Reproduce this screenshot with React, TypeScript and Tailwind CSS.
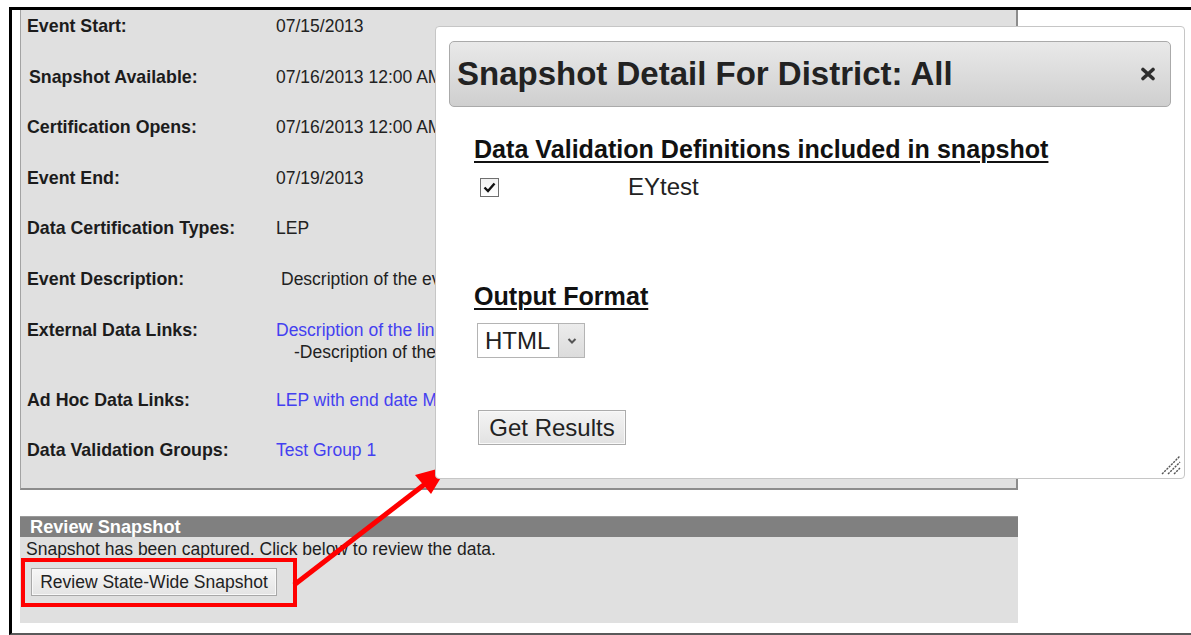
import React from "react";

type RowProps = {
  label: string;
  children: React.ReactNode;
  rowClass: string;
  labelClass?: string;
};

function Row({ label, children, rowClass, labelClass = "" }: RowProps) {
  return (
    <div className={`flex ${rowClass}`}>
      <div className={`w-[249px] shrink-0 font-bold text-[17.8px] text-[#1c1c1c] ${labelClass}`}>{label}</div>
      <div className="whitespace-nowrap text-[#222]">{children}</div>
    </div>
  );
}

function CloseIcon() {
  return (
    <svg width="16" height="14" viewBox="0 0 16 14" aria-hidden="true">
      <path d="M3 2.5 L13 11.5 M13 2.5 L3 11.5" stroke="#2e2e2e" strokeWidth="3.6" strokeLinecap="round" />
    </svg>
  );
}

function CheckedBox() {
  return (
    <div className="w-[19px] h-[19px] border border-[#6f6f6f] bg-gradient-to-b from-[#f2f2f2] to-white flex items-center justify-center">
      <svg width="15" height="15" viewBox="0 0 15 15" aria-hidden="true">
        <path d="M2.5 7.5 L6 11 L12.5 3.5" fill="none" stroke="#111" strokeWidth="2.4" />
      </svg>
    </div>
  );
}

function ResizeGrip() {
  return (
    <svg width="22" height="22" viewBox="0 0 22 22" aria-hidden="true">
      <g stroke="#555" strokeWidth="1.4" strokeDasharray="2.2 1">
        <path d="M3 21 L21 3" />
        <path d="M9 21 L21 9" />
        <path d="M15 21 L21 15" />
      </g>
    </svg>
  );
}

export default function App() {
  return (
    <div className="relative w-[1191px] h-[635px] overflow-hidden bg-white pt-[7px] pl-[9px] font-['Liberation_Sans',Arial,sans-serif] text-[17.5px] leading-[22px]">
      {/* page frame */}
      <div className="w-[1182px] h-[628px] border-l-[3px] border-t-[3px] border-black border-b-2 border-b-[#5a5a5a] pl-[8px]">
        {/* event detail panel */}
        <div className="w-[998px] h-[480px] bg-[#e0e0e0] border-l border-l-[#a3a3a3] border-r-2 border-r-[#8c8c8c] border-b-2 border-b-[#8c8c8c] pl-[6px] pt-[5px] overflow-hidden">
          <Row label="Event Start:" rowClass="h-[50.6px]">07/15/2013</Row>
          <Row label="Snapshot Available:" rowClass="h-[50.6px]" labelClass="pl-[2px]">
            07/16/2013 12:00 AM
          </Row>
          <Row label="Certification Opens:" rowClass="h-[50.6px]">07/16/2013 12:00 AM</Row>
          <Row label="Event End:" rowClass="h-[50.6px]">07/19/2013</Row>
          <Row label="Data Certification Types:" rowClass="h-[50.6px]">LEP</Row>
          <Row label="Event Description:" rowClass="h-[50.6px]">
            <span className="pl-[5px]">Description of the event</span>
          </Row>
          <Row label="External Data Links:" rowClass="h-[70px]">
            <div className="text-[#4440f0]">Description of the link</div>
            <div className="pl-[18px]">-Description of the link</div>
          </Row>
          <Row label="Ad Hoc Data Links:" rowClass="h-[50.6px]">
            <span className="text-[#4440f0]">LEP with end date Missing</span>
          </Row>
          <Row label="Data Validation Groups:" rowClass="h-[50.6px]">
            <span className="text-[#4440f0]">Test Group 1</span>
          </Row>
        </div>

        {/* review snapshot section */}
        <div className="mt-[26px] w-[998px]">
          <div className="h-[21px] bg-[#808080] border-t border-t-[#9a9a9a] pl-[10px] text-white font-bold text-[18.2px] leading-[20px]">
            Review Snapshot
          </div>
          <div className="h-[86px] bg-[#e0e0e0] pl-[6px] pt-[1px]">
            <div className="text-[#1e1e1e]">Snapshot has been captured. Click below to review the data.</div>
            <button className="mt-[8px] ml-[5px] w-[246px] h-[28px] border border-[#a8a8a8] bg-gradient-to-b from-[#f6f6f6] to-[#e4e4e4] text-[#222] text-[17.5px] leading-[22px] shadow-[inset_0_0_0_1px_#f8f8f8]">
              Review State-Wide Snapshot
            </button>
          </div>
        </div>
      </div>

      {/* highlight around the review button */}
      <div className="absolute left-[21px] top-[558px] w-[276px] h-[49px] border-[4px] border-[#ff0000]" />

      {/* pointer arrow */}
      <svg className="absolute left-0 top-0" width="1191" height="635" aria-hidden="true">
        <line x1="294" y1="585" x2="425" y2="484" stroke="#ff0000" strokeWidth="5" />
        <polygon points="448,466 431,494 415,475" fill="#ff0000" />
      </svg>

      {/* snapshot detail dialog */}
      <div className="absolute left-[435px] top-[26px] w-[750px] h-[453px] bg-white border border-[#c6c6c6] rounded-[4px] pt-[14px] px-[13px]">
        <div className="h-[66px] rounded-[5px] border border-[#aaaaaa] bg-gradient-to-b from-[#e9e9e9] to-[#cfcfcf] flex items-center justify-between pl-[7px] pr-[14px]">
          <div className="text-[33px] leading-[38px] font-bold text-[#222]">Snapshot Detail For District: All</div>
          <CloseIcon />
        </div>

        <div className="pl-[25px]">
          <div className="mt-[28px] text-[25.1px] leading-[29px] font-bold text-[#111] underline decoration-2 underline-offset-[3px]">
            Data Validation Definitions included in snapshot
          </div>
          <div className="mt-[8px] h-[30px] flex items-center">
            <div className="ml-[6px]">
              <CheckedBox />
            </div>
            <div className="ml-[129px] text-[24px] leading-[30px] text-[#222]">EYtest</div>
          </div>

          <div className="mt-[80px] text-[25.1px] leading-[29px] font-bold text-[#111] underline decoration-2 underline-offset-[3px]">
            Output Format
          </div>
          <div className="mt-[12px] ml-[3px] flex w-[108px] h-[35px] border border-[#b4b4b4] bg-white">
            <div className="flex-1 pl-[7px] text-[24px] leading-[33px] text-[#222]">HTML</div>
            <div className="w-[26px] h-full border-l border-l-[#b4b4b4] bg-gradient-to-b from-[#ececec] to-[#dcdcdc] flex items-center justify-center">
              <svg width="12" height="8" viewBox="0 0 12 8" aria-hidden="true">
                <path d="M2.5 2 L6 5.5 L9.5 2" fill="none" stroke="#555" strokeWidth="2" />
              </svg>
            </div>
          </div>

          <button className="mt-[52px] ml-[4px] w-[148px] h-[35px] border border-[#acacac] bg-gradient-to-b from-[#f4f4f4] to-[#e2e2e2] text-[24px] leading-[30px] text-[#222] shadow-[inset_0_0_0_1px_#f9f9f9]">
            Get Results
          </button>
        </div>

        <div className="absolute right-[3px] bottom-[3px]">
          <ResizeGrip />
        </div>
      </div>
    </div>
  );
}
